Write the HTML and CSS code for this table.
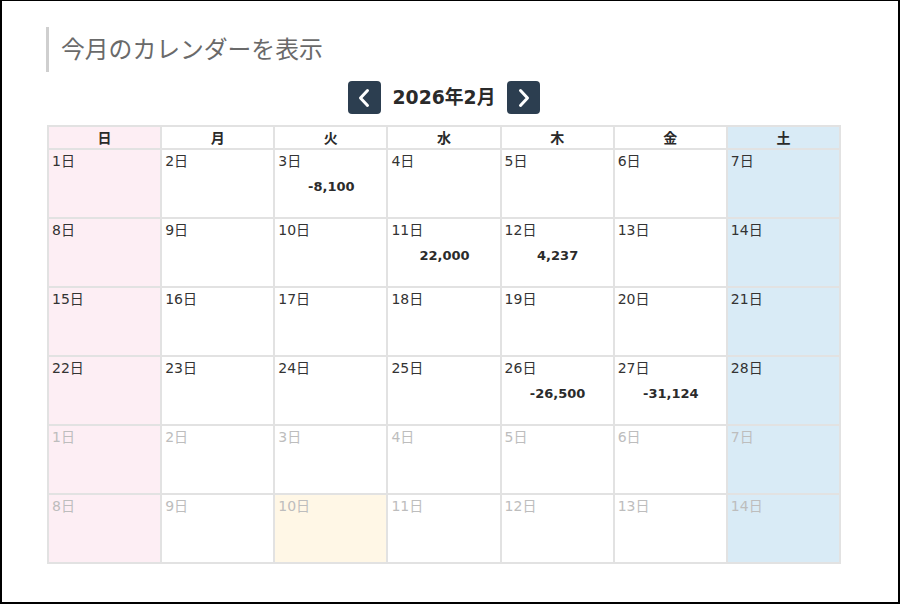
FILE: index.html
```html
<!DOCTYPE html>
<html lang="ja">
<head>
<meta charset="utf-8">
<title>今月のカレンダーを表示</title>
<link rel="stylesheet" href="styles.css">
</head>
<body>
<div class="frame">
  <div class="content">
    <h2 class="title">今月のカレンダーを表示</h2>
    <div class="nav">
      <button class="nav-btn" aria-label="前の月">
        <svg width="14" height="20" viewBox="0 0 14 20"><path d="M10.5 2.5 L3.5 10 L10.5 17.5" fill="none" stroke="#fff" stroke-width="3" stroke-linecap="round" stroke-linejoin="round"/></svg>
      </button>
      <span class="nav-title">2026年2月</span>
      <button class="nav-btn" aria-label="次の月">
        <svg width="14" height="20" viewBox="0 0 14 20"><path d="M3.5 2.5 L10.5 10 L3.5 17.5" fill="none" stroke="#fff" stroke-width="3" stroke-linecap="round" stroke-linejoin="round"/></svg>
      </button>
    </div>
    <table class="cal">
      <thead>
        <tr>
          <th class="sun">日</th><th>月</th><th>火</th><th>水</th><th>木</th><th>金</th><th class="sat">土</th>
        </tr>
      </thead>
      <tbody>
        <tr>
          <td class="sun"><div class="d">1日</div></td>
          <td><div class="d">2日</div></td>
          <td><div class="d">3日</div><div class="amt">-8,100</div></td>
          <td><div class="d">4日</div></td>
          <td><div class="d">5日</div></td>
          <td><div class="d">6日</div></td>
          <td class="sat"><div class="d">7日</div></td>
        </tr>
        <tr>
          <td class="sun"><div class="d">8日</div></td>
          <td><div class="d">9日</div></td>
          <td><div class="d">10日</div></td>
          <td><div class="d">11日</div><div class="amt">22,000</div></td>
          <td><div class="d">12日</div><div class="amt">4,237</div></td>
          <td><div class="d">13日</div></td>
          <td class="sat"><div class="d">14日</div></td>
        </tr>
        <tr>
          <td class="sun"><div class="d">15日</div></td>
          <td><div class="d">16日</div></td>
          <td><div class="d">17日</div></td>
          <td><div class="d">18日</div></td>
          <td><div class="d">19日</div></td>
          <td><div class="d">20日</div></td>
          <td class="sat"><div class="d">21日</div></td>
        </tr>
        <tr>
          <td class="sun"><div class="d">22日</div></td>
          <td><div class="d">23日</div></td>
          <td><div class="d">24日</div></td>
          <td><div class="d">25日</div></td>
          <td><div class="d">26日</div><div class="amt">-26,500</div></td>
          <td><div class="d">27日</div><div class="amt">-31,124</div></td>
          <td class="sat"><div class="d">28日</div></td>
        </tr>
        <tr class="other">
          <td class="sun"><div class="d">1日</div></td>
          <td><div class="d">2日</div></td>
          <td><div class="d">3日</div></td>
          <td><div class="d">4日</div></td>
          <td><div class="d">5日</div></td>
          <td><div class="d">6日</div></td>
          <td class="sat"><div class="d">7日</div></td>
        </tr>
        <tr class="other">
          <td class="sun"><div class="d">8日</div></td>
          <td><div class="d">9日</div></td>
          <td class="today"><div class="d">10日</div></td>
          <td><div class="d">11日</div></td>
          <td><div class="d">12日</div></td>
          <td><div class="d">13日</div></td>
          <td class="sat"><div class="d">14日</div></td>
        </tr>
      </tbody>
    </table>
  </div>
</div>
</body>
</html>
```

FILE: styles.css
```css
html, body {
  margin: 0;
  padding: 0;
  background: #fff;
}

.frame {
  width: 900px;
  height: 604px;
  box-sizing: border-box;
  border: 2px solid #000;
  border-top-width: 1px;
  font-family: "DejaVu Sans", "Noto Sans CJK JP", sans-serif;
  color: #333;
}

.content {
  padding: 26px 0 0 45px;
  width: 794px;
}

.title {
  margin: 0 0 0 -1px;
  height: 45px;
  border-left: 3px solid #cfcfcf;
  padding: 0 0 0 12px;
  font-family: "Noto Sans CJK JP", sans-serif;
  font-weight: 400;
  font-size: 23.8px;
  line-height: 41px;
  color: #6a6a6a;
}

.nav {
  margin-top: 9px;
  display: flex;
  justify-content: center;
  align-items: center;
  gap: 12px;
  height: 33px;
}

.nav-btn {
  width: 33px;
  height: 33px;
  padding: 0;
  border: none;
  border-radius: 4px;
  background: #2c3e50;
  display: flex;
  align-items: center;
  justify-content: center;
}

.nav-title {
  font-size: 18.8px;
  font-weight: 700;
  color: #2a2a2a;
  line-height: 33px;
}

.cal {
  margin-top: 11px;
  width: 794px;
  table-layout: fixed;
  border-collapse: separate;
  border-spacing: 0;
  border: 1px solid #e2e2e2;
}

.cal th,
.cal td {
  border: 1px solid #e2e2e2;
  padding: 0;
}

.cal th {
  height: 21px;
  font-size: 14px;
  font-weight: 700;
  line-height: 21px;
  text-align: center;
  color: #2a2a2a;
  font-family: "Noto Sans CJK JP", sans-serif;
}

.cal td {
  height: 69px;
  vertical-align: top;
  padding: 1px 2px 0 3px;
  box-sizing: border-box;
}

.sun { background: #fdeef4; }
.sat { background: #d9ebf6; }
.today { background: #fff7e6; }

.d {
  font-size: 14px;
  line-height: 20px;
  color: #333;
}

.amt {
  margin-top: 7px;
  font-size: 13px;
  font-weight: 700;
  line-height: 18px;
  text-align: center;
  color: #2b2b2b;
}

.other .d {
  color: #bdbdbd;
}
```
